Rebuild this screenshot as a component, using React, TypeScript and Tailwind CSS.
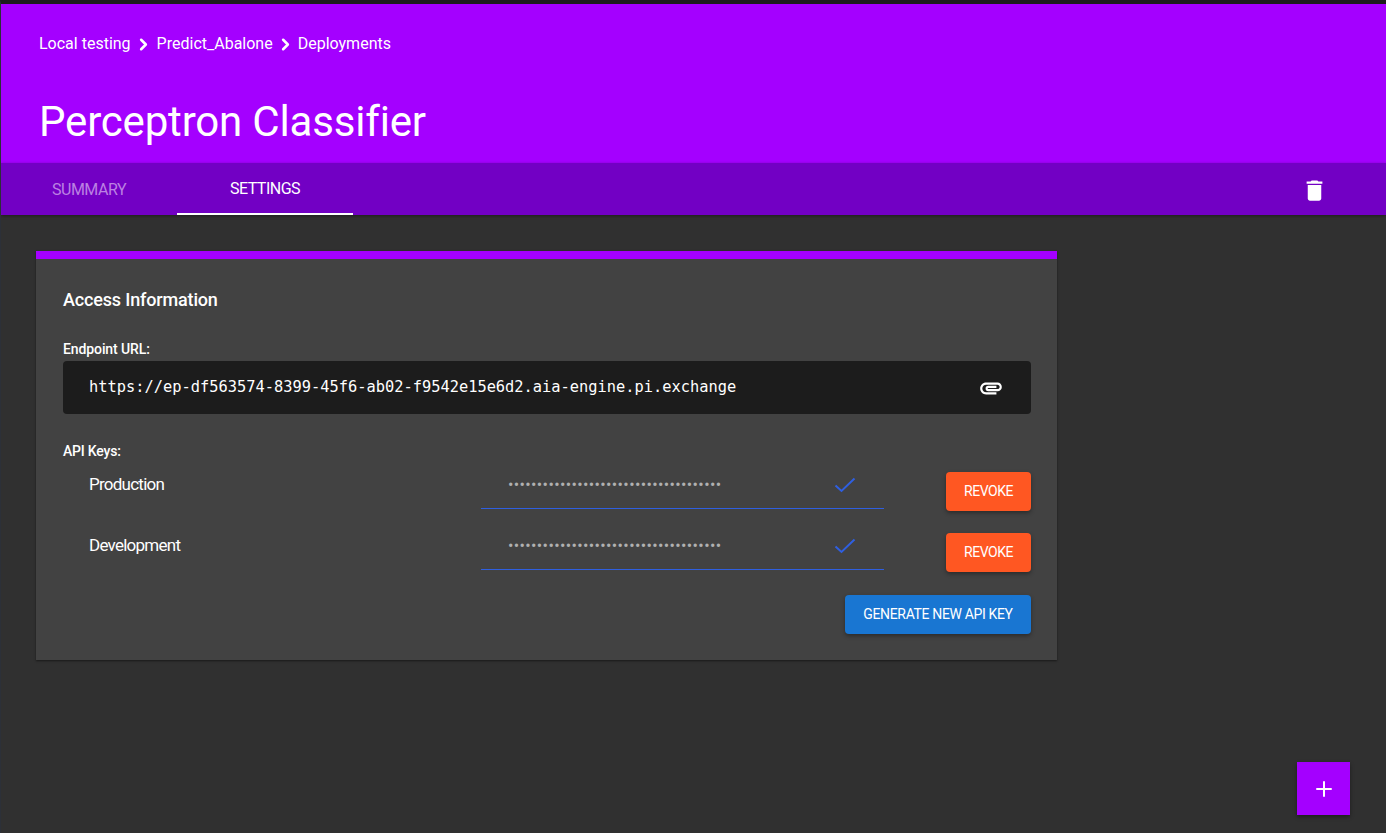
import React from "react";
import { MdAttachment, MdDelete } from "react-icons/md";
import { ChevronRight, Plus } from "lucide-react";

const sans = "font-['Roboto','Liberation_Sans',sans-serif]";

type ApiKeyRowProps = {
  label: string;
};

const ApiKeyRow: React.FC<ApiKeyRowProps> = ({ label }) => {
  return (
    <div className="flex h-[61px]">
      <div className="w-[418px] pl-[26px] pt-[9px] text-[17px] leading-[24px] tracking-[-0.75px] text-white">
        {label}
      </div>
      <div className="flex h-[46px] w-[403px] items-center justify-between border-b border-[#2f5fe0] pl-[27px] pr-[28px] pb-[2px]">
        <span className="text-[16px] leading-none tracking-[0.37px] text-[#b0b0b0]">
          {"•".repeat(37)}
        </span>
        <svg width="22" height="16" viewBox="0 0 22 16" fill="none" stroke="#2f5fe0" strokeWidth="2">
          <path d="M1.5 8.5l6 5.5L20.5 1.5" />
        </svg>
      </div>
      <div className="ml-auto pt-[9px]">
        <button className="h-[39px] w-[85px] rounded bg-[#ff5722] text-[14px] tracking-[-0.5px] text-white shadow-[0_2px_4px_rgba(0,0,0,0.35)]">
          REVOKE
        </button>
      </div>
    </div>
  );
};

const App: React.FC = () => {
  return (
    <div className={`${sans} flex h-[833px] w-[1386px] flex-col overflow-hidden border-t-4 border-l border-t-[#1c1c1c] border-l-[#2c3038] bg-[#303030]`}>
      <header className="h-[159px] bg-[#a400ff] px-[38px] text-white">
        <div className="flex h-[80px] items-center gap-[3px] text-[16px]">
          <span>Local testing</span>
          <ChevronRight size={19} strokeWidth={3.2} />
          <span className="ml-[1px]">Predict_Abalone</span>
          <ChevronRight size={19} strokeWidth={3.2} />
          <span>Deployments</span>
        </div>
        <h1 className="text-[42px] leading-[76px] tracking-[-0.18px]">Perceptron Classifier</h1>
      </header>

      <nav className="flex h-[52px] items-stretch bg-[#7200c4] pr-[58px] text-[16px] tracking-[-0.5px] shadow-[0_1px_3px_rgba(0,0,0,0.4)]">
        <div className="flex w-[176px] items-center pl-[51px] pt-[2px] text-[#bb80e2]">SUMMARY</div>
        <div className="flex w-[176px] items-center justify-center border-b-2 border-white pt-[2px] text-white">SETTINGS</div>
        <MdDelete size={27} className="ml-auto mt-[14px] text-white" />
      </nav>

      <main className="pl-[35px] pt-[36px]">
        <section className="h-[409px] w-[1021px] border-t-8 border-[#a400ff] bg-[#424242] pl-[27px] pr-[26px] shadow-[0_1px_2px_rgba(0,0,0,0.5)]">
          <h2 className="pt-[29px] text-[18px] font-medium leading-[24px] tracking-[-0.16px] text-white">Access Information</h2>
          <div className="pt-[28px] text-[14px] font-medium leading-[18px] tracking-[-0.1px] text-white">Endpoint URL:</div>
          <div className="mt-[3px] flex h-[53px] items-center justify-between rounded bg-[#1c1c1c] pl-[26px] pr-[27px]">
            <span className="font-['DejaVu_Sans_Mono',monospace] text-[15.36px] text-white">
              https://ep-df563574-8399-45f6-ab02-f9542e15e6d2.aia-engine.pi.exchange
            </span>
            <MdAttachment size={26} className="text-white" />
          </div>
          <div className="pt-[28px] text-[14px] font-medium leading-[18px] tracking-[-0.2px] text-white">API Keys:</div>
          <div className="pt-[3px]">
            <ApiKeyRow label="Production" />
            <ApiKeyRow label="Development" />
          </div>
          <div className="flex justify-end pt-[10px]">
            <button className="h-[39px] w-[186px] rounded bg-[#1976d2] text-[14px] tracking-[-0.35px] text-white shadow-[0_2px_4px_rgba(0,0,0,0.35)]">
              GENERATE NEW API KEY
            </button>
          </div>
        </section>
      </main>

      <button className="fixed bottom-[18px] right-[36px] flex h-[53px] w-[53px] items-center justify-center bg-[#a400ff] text-white shadow-[0_2px_4px_rgba(0,0,0,0.4)]">
        <Plus size={24} strokeWidth={2} />
      </button>
    </div>
  );
};

export default App;
